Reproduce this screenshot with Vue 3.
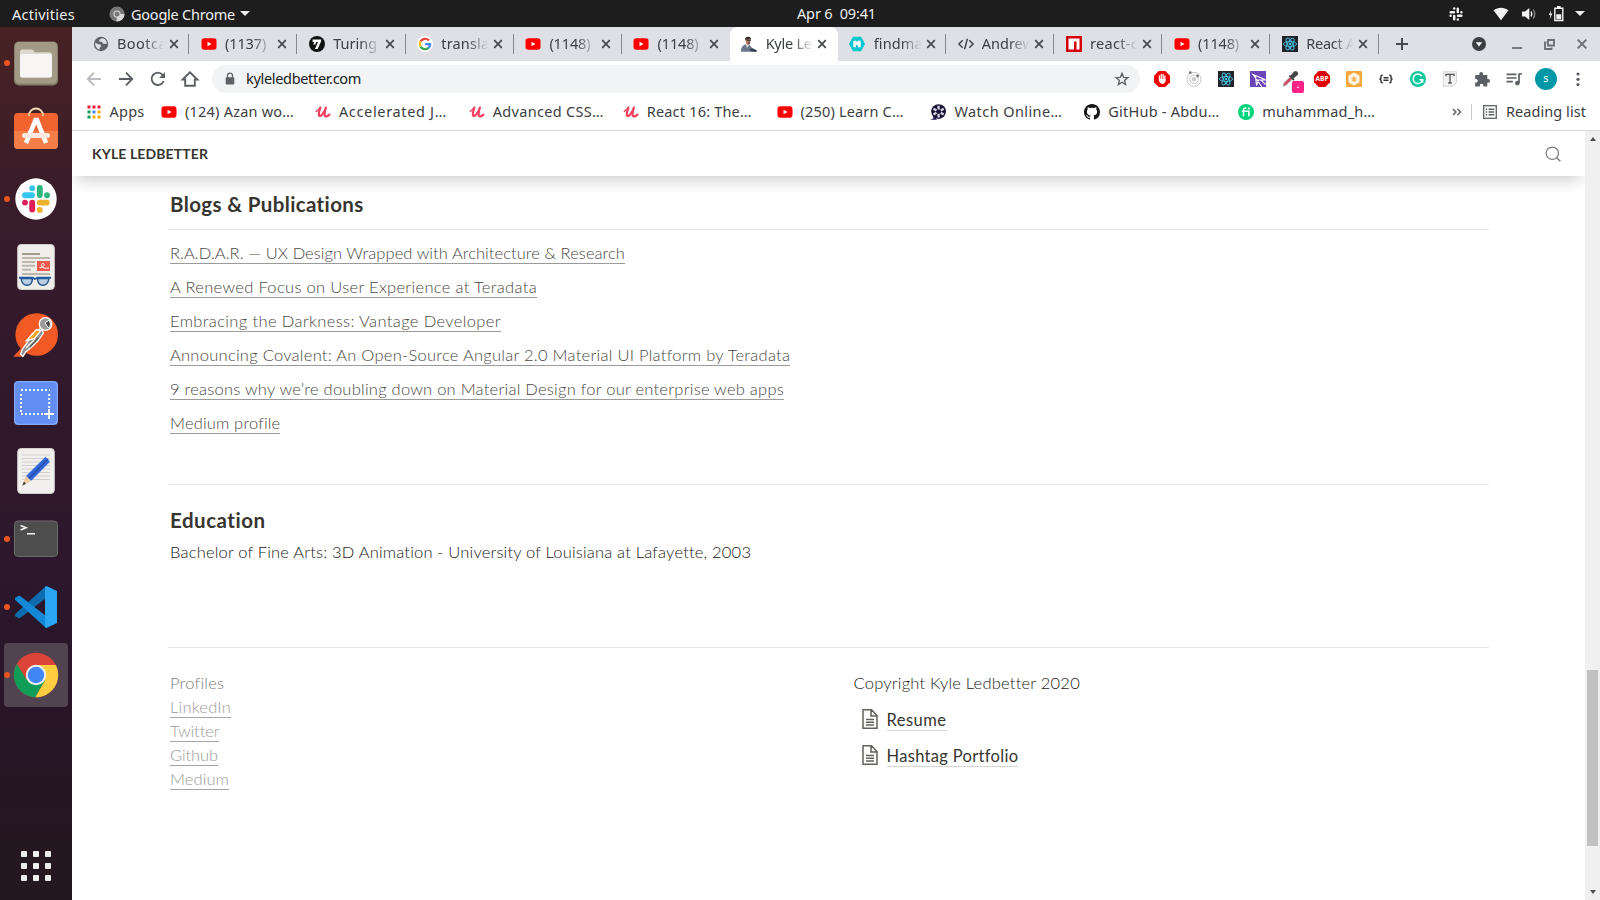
<script setup>
// Spreads the letters of an element so that its text takes the given width.
const vFit = {
  mounted(el, binding) {
    const natural = el.getBoundingClientRect().width
    el.style.letterSpacing = (binding.value - natural) / el.textContent.length + 'px'
  },
}

const atom = `<rect width="16" height="16" fill="#20232a"/><g fill="none" stroke="#4cc3e6" stroke-width=".9"><ellipse cx="8" cy="8" rx="6.6" ry="2.5"/><ellipse cx="8" cy="8" rx="6.6" ry="2.5" transform="rotate(60 8 8)"/><ellipse cx="8" cy="8" rx="6.6" ry="2.5" transform="rotate(120 8 8)"/></g><circle cx="8" cy="8" r="1.3" fill="#4cc3e6"/>`

const icons = {
  globe: `<circle cx="8" cy="8" r="7.2" fill="#5f6368"/><path d="M2.200 6.600 5.200 8.300l2.300.2.800 1.800-1.500 1.300-.4 2.200C3.800 13 1.800 10 2.200 6.600zM8.800 2.300 6.300 3.700l-.2 1.700 2.500.3 1.500 2 3.700.2C14 5 11.900 2.500 8.800 2.300z" fill="#dee0e5"/>`,
  yt: `<rect x=".5" y="2.300" width="15" height="11.400" rx="2.600" fill="#f00"/><path d="M6.500 5.700v4.600l4-2.300z" fill="#fff"/>`,
  turing: `<circle cx="8" cy="8" r="8" fill="#111"/><path d="M3.600 3.500h8.700l-.4 2.200L8.600 13H6l3-6.900H7.400L6.300 8.600H4.200l1.100-2.500H3.600z" fill="#fff"/>`,
  google: `<circle cx="8" cy="8" r="8" fill="#fff"/><g fill="none" stroke-width="2.200"><path d="M11.900 4.500A5.200 5.200 0 0 0 3.500 5.400" stroke="#ea4335"/><path d="M3.500 5.400a5.300 5.300 0 0 0 0 5.200" stroke="#fbbc05"/><path d="M3.500 10.600a5.200 5.200 0 0 0 8 1.300" stroke="#34a853"/><path d="M11.500 11.900A5 5 0 0 0 13.100 8.100H8.200" stroke="#4285f4"/></g>`,
  kyle: `<path d="M0 15.800C0 12 1 10 4.200 8.600l3.600-.6 2.900 3.500 5 2.800-.2 1.600-6.500-.2-1.600.1z" fill="#6b7688"/><path d="M4.800 7.800 6 12l2.200-3.500z" fill="#e8e6e8"/><path d="M9 12.600l6.500 1.700-.3 1.400-5.700-1z" fill="#30384a"/><path d="M4.600 4 5.200 8l2.200 1L9.200 7l.5-3.700z" fill="#b87862"/><path d="M4.400 4.600c-.8-3 1-4 2.900-3.900 1.800.1 2.900.9 2.600 2.200L6 3.400z" fill="#352725"/><path d="M5.200 3.600h4.600v1.200h-3.600zM6.700 6.600h2.200L8.400 8.200z" fill="#2a2225"/>`,
  hex: `<path d="M4 .7h8L16 8l-4 7.300H4L0 8z" fill="#00c8ce"/><path d="M4.300 4.700h2.600L8 6l1.100-1.300h2.600v6.600H9.100V9.300H6.900v2H4.300z" fill="#fff"/>`,
  code: `<path d="M4.700 4.200.9 8l3.800 3.800M11.300 4.200 15.100 8l-3.800 3.800M9.400 2.800 6.600 13.200" fill="none" stroke="#3c4043" stroke-width="1.400"/>`,
  npm: `<rect width="16" height="16" fill="#d8000b"/><path d="M2.500 2.500h11v11h-3v-8H8v8H2.500z" fill="#fff"/>`,
  atom,
  apps: `<g><path fill="#ea1c3c" d="M1.500 1.500h3v3h-3zM6.500 1.500h3v3h-3zM11.500 1.500h3v3h-3z"/><path fill="#0f9d58" d="M1.500 6.500h3v3h-3zM1.500 11.500h3v3h-3z"/><path fill="#4285f4" d="M6.500 6.500h3v3h-3z"/><path fill="#f9ab00" d="M11.500 6.500h3v3h-3zM6.500 11.500h3v3h-3zM11.500 11.500h3v3h-3z"/></g>`,
  udemy: `<g fill="none" stroke="#f4415f" stroke-linecap="round" stroke-linejoin="round"><path d="M1.300 7.400Q3.500 6.200 5.200 3.600" stroke-width="1.600"/><path d="M5.400 3.600Q3.400 8.500 3.900 11.400 5.800 13.500 8.800 8" stroke-width="2.200"/><path d="M10.900 3.600Q9 8.600 9.700 11.600 11.200 13.700 14.400 10.600" stroke-width="2.200"/><path d="M8.800 8Q10 6 10.800 3.600" stroke-width="1.300"/></g>`,
  reel: `<path d="M2 9l1.600 5.200-3.200 1.600H7z" fill="#241654"/><circle cx="8.600" cy="7.600" r="7.400" fill="#1b1636"/><g stroke="#d4d4e4" stroke-width="2.300"><path d="M8.600 1.800v3.600M8.600 9.800v3.600M3.500 4.700l3 1.700M10.700 8.800l3 1.700M3.500 10.500l3-1.700M10.700 6.400l3-1.700"/></g>`,
  github: `<path fill="#151515" d="M8 0C3.580 0 0 3.580 0 8c0 3.540 2.290 6.530 5.470 7.590.4.070.550-.170.550-.380 0-.190-.010-.820-.010-1.490-2.010.370-2.530-.490-2.690-.940-.090-.230-.480-.940-.820-1.130-.280-.150-.680-.520-.010-.530.630-.010 1.080.580 1.230.820.720 1.210 1.870.870 2.330.660.070-.520.280-.870.510-1.070-1.780-.200-3.640-.890-3.640-3.950 0-.870.310-1.590.820-2.150-.080-.200-.360-1.020.080-2.120 0 0 .670-.210 2.200.820.640-.180 1.320-.270 2-.270s1.360.090 2 .270c1.530-1.040 2.200-.820 2.200-.820.440 1.100.160 1.920.080 2.120.510.560.820 1.270.820 2.150 0 3.070-1.870 3.750-3.650 3.950.290.250.540.730.540 1.480 0 1.070-.010 1.930-.010 2.200 0 .210.150.460.550.380A8.010 8.010 0 0 0 16 8c0-4.420-3.580-8-8-8z"/>`,
  fiverr: `<circle cx="8" cy="8" r="8" fill="#00d47e"/><path d="M5.500 12.200V6c0-1.500.8-2 2.700-1.900M3.700 7.200h7.200v5" fill="none" stroke="#fff" stroke-width="1.600"/><circle cx="10.900" cy="4.500" r="1" fill="#fff"/>`,
  back: `<path d="M15 8H2M8 1.700 1.800 8 8 14.300" fill="none" stroke="#b9bbbe" stroke-width="1.900"/>`,
  forward: `<path d="M1 8h13M8 1.700 14.200 8 8 14.300" fill="none" stroke="#5b5e63" stroke-width="1.900"/>`,
  reload: `<path d="M13.700 10A6.200 6.200 0 1 1 12.600 3.800L14 5.400" fill="none" stroke="#5b5e63" stroke-width="1.900"/><path d="M15 .900V6.900H9z" fill="#5b5e63"/>`,
  home: `<path d="M8 1.300.7 8.500h2.500v6.200h9.600V8.500h2.500z" fill="none" stroke="#5b5e63" stroke-width="1.900"/>`,
  lock: `<rect x="3.700" y="6.300" width="8.600" height="7.200" rx="1" fill="#5f6368"/><path d="M5.500 7V4.600a2.500 2.500 0 0 1 5 0V7" fill="none" stroke="#5f6368" stroke-width="1.300"/>`,
  star: `<path d="M8 2.200 9.600 6.300l4.300.3-3.300 2.800 1 4.200L8 11.300l-3.600 2.300 1-4.200L2.100 6.600l4.300-.3z" fill="none" stroke="#5b5e63" stroke-width="1.300"/>`,
  stop: `<path d="M4.700 0h6.600L16 4.700v6.600L11.300 16H4.700L0 11.300V4.700z" fill="#f40000"/><path d="M5.500 4.800v4M7.300 3.500v5M9.100 3.500v5M10.900 5v5" stroke="#fff" stroke-width="1.300" stroke-linecap="round"/><path d="M4.900 8h6.600v1.700c-.3 2-1.500 3.200-3.200 3.200S5.300 11.500 4.900 9.600z" fill="#fff"/>`,
  orbit: `<g fill="none" stroke="#c6c6c6"><circle cx="8" cy="8.300" r="7"/><circle cx="8" cy="8.300" r="4.200"/></g><circle cx="8" cy="8.300" r="2.200" fill="#c9c9c9"/><circle cx="4.300" cy="1.700" r="1.400" fill="#777"/><circle cx="11.600" cy="5" r="1.400" fill="#777"/>`,
  purple: `<rect width="16" height="16" fill="#6b44b8"/><path d="M3 3.500 16 9H7zM5.500 5l1 9.500L8.500 9M7 9l5 7M11 9l4.500 4.500" fill="none" stroke="#fff" stroke-width="1.100"/>`,
  dropper: `<path d="M1 15.200 2 12 8.300 5.700l2.200 2.200L4 14.300z" fill="#d64a62" stroke="#a8a8a8" stroke-width=".8"/><path d="M7.300 4.500 12 9.200M9 5.600 12.600 1.200c1.600-1 3.300.7 2.400 2.300L10.500 7.200z" fill="#444" stroke="#444" stroke-width="1.700"/>`,
  octagon: `<path d="M4.700 0h6.600L16 4.700v6.600L11.300 16H4.700L0 11.300V4.700z" fill="#e00000"/>`,
  amber: `<rect width="16" height="16" rx="1" fill="#f8a83c"/><path d="M8 1.500 13.500 4.700v6.600L8 14.500 2.500 11.300V4.700z" fill="#fff8e9"/><path d="M8 5v6M5.500 6.600l2.500 1.500 2.500-1.500M5.700 9.500 8 8.100l2.300 1.400" fill="none" stroke="#f5b35c" stroke-width="1.300"/>`,
  braces: `<path d="M4.700 4.300H4q-1 0-1 1v1.700L2 8l1 1v1.700q0 1 1 1h.7M11.300 4.300h.7q1 0 1 1v1.700L14 8l-1 1v1.700q0 1-1 1h-.7M5.500 6.800h5M5.500 9.300h5" fill="none" stroke="#333" stroke-width="1.400"/>`,
  grammarly: `<circle cx="8" cy="8" r="8" fill="#11c79b"/><path d="M11.800 5A4.800 4.800 0 1 0 12.600 8.700H9.500M12.700 8.500v3" fill="none" stroke="#fff" stroke-width="1.500"/>`,
  letter: `<path d="M1.200.7h13.300v10.800l-3.600 3.800H1.200z" fill="#f1f1f1" stroke="#cfcfcf" stroke-width=".8"/><path d="M4 5.200V3.300h8v1.900M8 3.300v8.700M6.200 12h3.600" fill="none" stroke="#555" stroke-width="1.300"/>`,
  puzzle: `<path d="M1.200 4h4.100V2.800a1.900 1.900 0 0 1 3.800 0V4h4.200v4h.8a1.900 1.900 0 0 1 0 3.800h-.8v3.800H9.400v-1.100a1.800 1.800 0 0 0-3.600 0v1.100H1.200v-4h1.100a1.900 1.900 0 0 0 0-3.700H1.200z" fill="#5b5e63"/>`,
  music: `<path d="M.5 3.300h10M.5 7h10M.5 10.700h6.300M13 12V3h3" fill="none" stroke="#5b5e63" stroke-width="1.700"/><circle cx="11.400" cy="12.100" r="2.300" fill="#5b5e63"/>`,
  dots: `<g fill="#5b5e63"><circle cx="8" cy="3" r="1.600"/><circle cx="8" cy="8.300" r="1.600"/><circle cx="8" cy="13.600" r="1.600"/></g>`,
  list: `<rect x="1.700" y="1.700" width="12.600" height="12.600" fill="none" stroke="#5f6368" stroke-width="1.300"/><path d="M3.800 5.200h1.400M6.500 5.200h5.800M3.800 8h1.400M6.500 8h5.800M3.800 10.800h1.400M6.500 10.800h5.800" stroke="#5f6368" stroke-width="1.500"/>`,
  search: `<circle cx="7.300" cy="7.200" r="6.200" fill="none" stroke="#7d7d7d" stroke-width="1.250"/><path d="M11.700 11.700l3.600 3.500" stroke="#7d7d7d" stroke-width="1.500"/>`,
  chromeMono: `<circle cx="8" cy="8" r="7.600" fill="#777"/><path d="M8 8h7.500A7.600 7.600 0 0 1 7.500 15.600z" fill="#d8d8d8"/><circle cx="8" cy="8" r="3.600" fill="#d8d8d8"/><circle cx="8" cy="8" r="2.500" fill="#777"/>`,
  slackMono: `<g stroke="#f2f2f2" stroke-width="2.500" stroke-linecap="round"><path d="M2.700 6.200h3.200M6.200 2.600h.01M9.800 2.700v3.200M13.400 6.200h.01M10.100 9.800h3.200M9.800 13.400h.01M6.200 10.100v3.200M2.600 9.800h.01"/></g>`,
  wifi: `<path d="M.5 4.200C5 .8 11 .8 15.500 4.200L8 14.200z" fill="#f2f2f2"/>`,
  sound: `<path d="M1 5.500h3L8.300 2v12L4 10.500H1z" fill="#f2f2f2"/><path d="M10 5.500q1.600 2.500 0 5" fill="none" stroke="#f2f2f2" stroke-width="1.400"/><path d="M12.200 3.500q3 4.500 0 9" fill="none" stroke="#8a8a8a" stroke-width="1.300"/>`,
  battery: `<path d="M6.800 2.200h8v12.300h-8z" fill="none" stroke="#f2f2f2" stroke-width="1.400"/><path d="M9 0h3.600v2H9zM8.300 8.200h5v5h-5zM3 4 .8 9h1.600l-.6 4.300L4.300 7.600H2.600z" fill="#f2f2f2"/>`,
}

const dock = [
  { running: true, art: `<rect x="2" y="2.500" width="44" height="44" rx="5" fill="#847d6c"/><rect x="3" y="3" width="42" height="41.500" rx="4.500" fill="#a29a87"/><path d="M8 13q0-2.500 2.500-2.500h9.300q2 0 2.600 2.700h15q2.400 0 2.400 2.400V36q0 2.500-2.400 2.500H10.500Q8 38.500 8 36z" fill="#ded9cc"/><rect x="8" y="15" width="32" height="23.500" rx="2.500" fill="#f7f6f4"/>` },
  { art: `<path d="M17 9c0-10 14-10 14 0" fill="none" stroke="#f4d9b0" stroke-width="2"/><rect x="2" y="6" width="44" height="36" rx="4" fill="#f26330"/><path d="M2 24h44v14q0 4-4 4H6q-4 0-4-4z" fill="#f57d48"/><path d="M17 6v3M31 6v3" stroke="#f4d9b0" stroke-width="1.500"/><path d="M14 36 23.500 13h1.500L34 36" fill="none" stroke="#fff" stroke-width="4.600"/><path d="M12.500 28.500h23" stroke="#fbe9e1" stroke-width="5" stroke-linecap="round"/>` },
  { running: true, art: `<circle cx="24" cy="24" r="20.700" fill="#fff"/><g stroke-width="5.900" stroke-linecap="round"><path d="M13 20.200h7M20.200 13.200h.01" stroke="#36c5f0"/><path d="M27.800 13v7M35 20.200h.01" stroke="#2eb67d"/><path d="M27.800 27.600h7M27.800 34.900h.01" stroke="#ecb22e"/><path d="M20.200 27.600v7M13 27.600h.01" stroke="#e01e5a"/></g>` },
  { art: `<rect x="5.700" y="1.500" width="36.600" height="45" rx="3.500" fill="#efeeeb" stroke="#d2d0cc"/><path d="M10 11h18" stroke="#a59c8a" stroke-width="2"/><path d="M10 15h28M10 19h13M10 22.800h13M10 26.800h9M10 31h28" stroke="#bdb7ab" stroke-width="2"/><rect x="25" y="18" width="13" height="10" fill="#f05a4c"/><path d="M27.500 24.500c5 0 6-4 3.500-4s-3 6 6 4.500" fill="none" stroke="#fff" stroke-width="1"/><path d="M9 35.500h11.500c-.5 9-10 9-11.500 0zM25.500 35.500H37c-1.500 9-11 9-11.500 0z" fill="#b9cfe4" stroke="#27568f" stroke-width="1.400"/><path d="M7 34.700h13.500q2.500 2 5 0H39" fill="none" stroke="#275ba0" stroke-width="2"/>` },
  { art: `<circle cx="24.700" cy="23.500" r="21.300" fill="#f15a24"/><path d="M1.300 45.700 11 35l3 8-3 2.800z" fill="#f15a24"/><path d="M29 17 31.500 22 26 30 18.500 37 13.500 41 11 45.500 8.500 43 10.500 38 15 32 20 23z" fill="#8f8f8f" stroke="#fff" stroke-width="1.300" stroke-linejoin="round"/><path d="M14.500 29.500 24.500 18.500l4.500 1-6.500 8z" fill="#f9a01b" stroke="#fff" stroke-width="1.300"/><path d="M14 37l9-9" stroke="#fff" stroke-width="1.200"/><path d="M18 36l8-9" stroke="#555" stroke-width="1.200"/><circle cx="33.500" cy="13" r="6.300" fill="#9b9b9b" stroke="#fff" stroke-width="1.300"/><path d="M33 12l4-3q3 5-.5 8z" fill="#4a4a4a" stroke="#fff"/>` },
  { art: `<rect x="2" y="2" width="44" height="44" rx="4" fill="#638ff5"/><rect x="2.700" y="2.700" width="42.600" height="42.600" rx="4" fill="none" stroke="#8fb2fa" stroke-width="1"/><path d="M9 11h29M9 35h24M9 15v19M37.200 15v14" fill="none" stroke="#fff" stroke-width="2" stroke-dasharray="2 2"/><path d="M37 30v10M32 35h10" stroke="#fff" stroke-width="1.800"/>` },
  { art: `<rect x="5.700" y="1.500" width="36.600" height="45" rx="3.500" fill="#f1f0ee" stroke="#d2d0cc"/><path d="M10 8h28M10 11.500h28M10 15h28M10 18.500h28M10 22h28M10 25.500h28M10 29h28M10 32.500h28" stroke="#d0d0d0"/><path d="M33.500 9.800 38 14.800 19 34l-5-5z" fill="#3568d8"/><path d="M36 12 16.800 31.500" stroke="#244fae" stroke-width="1.500"/><path d="M14 29l5 5-8.700 4.500z" fill="#f3c9a0"/><path d="M10.300 38.500 12 34.700l2 2z" fill="#333"/>` },
  { running: true, art: `<rect x="2.500" y="6" width="43" height="35.500" rx="3.500" fill="#4d4d4d" stroke="#6b6b6b"/><path d="M8.500 10.500 14 12.800l-5.500 2.300M15 18.700h8" fill="none" stroke="#f4f4f4" stroke-width="1.600"/>` },
  { running: true, art: `<path d="M3.500 33.500c-.8-.8-.8-2 0-2.800L34 3v12L8.500 34.800c-.8.600-1.700.6-2.400 0z" fill="#0d6bb0"/><path d="M3.500 14.500c-.8.800-.8 2 0 2.800L34 45V33L8.500 13.200c-.8-.6-1.700-.6-2.400 0z" fill="#1489d6"/><path d="M34.500 3 45 8v32l-10.500 5L33 44V4z" fill="#2aa5f2"/>` },
  { running: true, active: true, art: `<circle cx="24" cy="24" r="22.200" fill="#db4437"/><path d="M24 14h19.800A22.200 22.200 0 0 1 23.300 46.200L33 29z" fill="#ffcd40"/><path d="M4.800 12.900 14.800 29 33 29 23.300 46.200A22.200 22.200 0 0 1 4.800 12.900z" fill="#0f9d58"/><circle cx="24" cy="24" r="10.200" fill="#f1f1f1"/><circle cx="24" cy="24" r="8.200" fill="#4285f4"/>` },
]

const tabs = [
  { icon: 'globe', title: 'Bootca', w: 50 },
  { icon: 'yt', title: '(1137)', w: 41 },
  { icon: 'turing', title: 'Turing', w: 44 },
  { icon: 'google', title: 'transla', w: 48 },
  { icon: 'yt', title: '(1148)', w: 41 },
  { icon: 'yt', title: '(1148)', w: 41, last: true },
  { icon: 'kyle', title: 'Kyle Le', w: 46, active: true },
  { icon: 'hex', title: 'findma', w: 49 },
  { icon: 'code', title: 'Andrew', w: 52 },
  { icon: 'npm', title: 'react-c', w: 48 },
  { icon: 'yt', title: '(1148)', w: 41 },
  { icon: 'atom', title: 'React A', w: 49 },
]

const bookmarks = [
  { icon: 'yt', title: '(124) Azan wo…', w: 109 },
  { icon: 'udemy', title: 'Accelerated J…', w: 108 },
  { icon: 'udemy', title: 'Advanced CSS…', w: 111 },
  { icon: 'udemy', title: 'React 16: The…', w: 105 },
  { icon: 'yt', title: '(250) Learn C…', w: 103 },
  { icon: 'reel', title: 'Watch Online…', w: 108 },
  { icon: 'github', title: 'GitHub - Abdu…', w: 111 },
  { icon: 'fiverr', title: 'muhammad_h…', w: 113 },
]

const extensions = ['stop', 'orbit', 'atom', 'purple', 'dropper', 'octagon', 'amber', 'braces', 'grammarly', 'letter', 'puzzle', 'music']

const posts = [
  { title: 'R.A.D.A.R. — UX Design Wrapped with Architecture & Research', w: 455 },
  { title: 'A Renewed Focus on User Experience at Teradata', w: 367 },
  { title: 'Embracing the Darkness: Vantage Developer', w: 331 },
  { title: 'Announcing Covalent: An Open-Source Angular 2.0 Material UI Platform by Teradata', w: 620 },
  { title: '9 reasons why we’re doubling down on Material Design for our enterprise web apps', w: 614 },
  { title: 'Medium profile', w: 110 },
]

const profiles = [
  { title: 'LinkedIn', w: 61 },
  { title: 'Twitter', w: 49 },
  { title: 'Github', w: 48 },
  { title: 'Medium', w: 59 },
]

const files = [
  { title: 'Resume', w: 60 },
  { title: 'Hashtag Portfolio', w: 131.5 },
]
</script>

<template>
  <div class="desktop">
    <header class="topbar">
      <div class="top-left">
        <span v-fit="63">Activities</span>
        <svg class="i16 app-icon" viewBox="0 0 16 16" v-html="icons.chromeMono" />
        <span v-fit="104">Google Chrome</span>
        <i class="caret" />
      </div>
      <div class="clock"><span v-fit="79">Apr 6&nbsp; 09:41</span></div>
      <div class="top-right">
        <svg class="i16 slack" viewBox="0 0 16 16" v-html="icons.slackMono" />
        <svg class="i16 wifi" viewBox="0 0 16 16" v-html="icons.wifi" />
        <svg class="i16 sound" viewBox="0 0 16 16" v-html="icons.sound" />
        <svg class="i16" viewBox="0 0 16 16" v-html="icons.battery" />
        <i class="caret" />
      </div>
    </header>

    <div class="workspace">
      <nav class="dock">
        <div v-for="(app, n) in dock" :key="n" class="app" :class="{ active: app.active }">
          <i v-if="app.running" class="running" />
          <svg width="48" height="48" viewBox="0 0 48 48" v-html="app.art" />
        </div>
        <div class="launcher"><i v-for="n in 9" :key="n" /></div>
      </nav>

      <div class="browser">
        <div class="tabstrip">
          <div v-for="(tab, n) in tabs" :key="n" class="tab" :class="{ active: tab.active, last: tab.last }">
            <svg class="i16" viewBox="0 0 16 16" v-html="icons[tab.icon]" />
            <div class="title"><span v-fit="tab.w">{{ tab.title }}</span></div>
            <svg class="close" viewBox="0 0 10 10"><path d="M1.200 1.200l7.600 7.600M8.800 1.200 1.200 8.800" /></svg>
          </div>
          <svg class="plus" viewBox="0 0 12 12"><path d="M6 0v12M0 6h12" /></svg>
          <div class="window-controls">
            <svg width="14" height="14" viewBox="0 0 14 14"><circle cx="7" cy="7" r="7" fill="#3c4043" /><path d="M3.800 5.300h6.400L7 9.500z" fill="#fff" /></svg>
            <svg width="10" height="12" viewBox="0 0 10 12"><path d="M0 10h10" /></svg>
            <svg width="11" height="11" viewBox="0 0 11 11"><path d="M4 1h6v5.500H4zM2.500 3.500H1V10h6.500V8.500" /></svg>
            <svg width="10" height="10" viewBox="0 0 10 10"><path d="M.7.700l8.600 8.600M9.300.700.700 9.300" /></svg>
          </div>
        </div>

        <div class="toolbar">
          <div class="nav">
            <svg v-for="name in ['back', 'forward', 'reload', 'home']" :key="name" class="i16" viewBox="0 0 16 16" v-html="icons[name]" />
          </div>
          <div class="omnibox">
            <svg class="i16" viewBox="0 0 16 16" v-html="icons.lock" />
            <span v-fit="115" class="url">kyleledbetter.com</span>
            <svg class="i16 star" viewBox="0 0 16 16" v-html="icons.star" />
          </div>
          <div class="extensions">
            <div v-for="name in extensions" :key="name" class="ext">
              <svg class="i16" viewBox="0 0 16 16" v-html="icons[name]" />
              <b v-if="name === 'octagon'" class="abp">ABP</b>
              <b v-if="name === 'dropper'" class="badge">.</b>
            </div>
          </div>
          <div class="avatar">s</div>
          <svg class="i16 menu" viewBox="0 0 16 16" v-html="icons.dots" />
        </div>

        <div class="bookmarks">
          <div class="bookmark apps">
            <svg class="i16" viewBox="0 0 16 16" v-html="icons.apps" />
            <span v-fit="35">Apps</span>
          </div>
          <div v-for="(mark, n) in bookmarks" :key="n" class="bookmark">
            <svg class="i16" viewBox="0 0 16 16" v-html="icons[mark.icon]" />
            <span v-fit="mark.w">{{ mark.title }}</span>
          </div>
          <div class="reading">
            <svg class="more" viewBox="0 0 10 8"><path d="M1 1l3 3-3 3M5.500 1l3 3-3 3" /></svg>
            <i class="divider" />
            <svg class="i16" viewBox="0 0 16 16" v-html="icons.list" />
            <span v-fit="80">Reading list</span>
          </div>
        </div>

        <div class="viewport">
          <div class="page">
            <div class="site-header">
              <strong v-fit="116">KYLE LEDBETTER</strong>
              <svg class="i16" viewBox="0 0 16 16" v-html="icons.search" />
            </div>
            <main>
              <section class="blogs">
                <h2><span v-fit="194">Blogs &amp; Publications</span></h2>
                <ul>
                  <li v-for="post in posts" :key="post.title"><a v-fit="post.w">{{ post.title }}</a></li>
                </ul>
              </section>
              <section class="education">
                <h2><span v-fit="96">Education</span></h2>
                <p><span v-fit="581">Bachelor of Fine Arts: 3D Animation - University of Louisiana at Lafayette, 2003</span></p>
              </section>
              <footer>
                <div class="profiles">
                  <p><span v-fit="54">Profiles</span></p>
                  <p v-for="item in profiles" :key="item.title"><a v-fit="item.w">{{ item.title }}</a></p>
                </div>
                <div class="legal">
                  <p><span v-fit="226">Copyright Kyle Ledbetter 2020</span></p>
                  <div v-for="file in files" :key="file.title" class="file">
                    <svg width="16" height="20" viewBox="0 0 16 20"><path d="M1 .800h8.500l5.500 5.700v12.700H1zM9 1v6h6M4 10.500h8M4 13.200h8M4 16h8" /></svg>
                    <a v-fit="file.w">{{ file.title }}</a>
                  </div>
                </div>
              </footer>
            </main>
          </div>
          <div class="scrollbar">
            <i class="arrow up" />
            <div class="thumb" />
            <i class="arrow down" />
          </div>
        </div>
      </div>
    </div>
  </div>
</template>

<style>
body { margin: 0; overflow: hidden; }
</style>

<style scoped>
* { box-sizing: border-box; }
.desktop { width: 1600px; height: 900px; display: flex; flex-direction: column; overflow: hidden; background: #fff; font-family: "Noto Sans", "Open Sans", sans-serif; font-size: 14.5px; color: #3c4043; }
.desktop span, .desktop strong, .desktop a { white-space: nowrap; }
svg { display: block; flex: none; }
.i16 { width: 16px; height: 16px; overflow: visible; }

.topbar { height: 27px; flex: none; display: grid; grid-template-columns: 1fr auto 1fr; align-items: center; background: #1d1d1d; color: #eee; line-height: 26px; }
.top-left, .top-right { display: flex; align-items: center; }
.top-left { padding-left: 12px; }
.app-icon { margin: 0 6px 0 34px; }
.caret { width: 0; height: 0; border: 5px solid transparent; border-top-color: #eee; border-bottom: 0; }
.top-left .caret { margin-left: 5px; }
.clock { margin: 0 -36.500px 0 36.500px; line-height: 25px; }
.top-right { justify-content: flex-end; padding-right: 15px; }
.slack { margin-right: 29px; }
.wifi { margin-right: 12px; }
.sound { margin-right: 11px; }
.top-right .caret { margin-left: 11px; }

.workspace { flex: 1; display: flex; min-height: 0; }
.dock { width: 72px; flex: none; padding-top: 2px; display: flex; flex-direction: column; align-items: center; background: linear-gradient(#482222 0, #3b1d29 17%, #33192c 36%, #2c172c 62%, #281628 78%, #24171d 100%); }
.app { position: relative; width: 64px; height: 64px; margin: 2px 0; display: grid; place-items: center; flex: none; border-radius: 4px; }
.app.active { background: #51434f; }
.running { position: absolute; left: 0; top: 29px; width: 6px; height: 6px; border-radius: 50%; background: #e95420; }
.launcher { margin-top: auto; margin-bottom: 19px; display: grid; grid-template-columns: repeat(3, 6px); gap: 6px; }
.launcher i { height: 6px; border-radius: 1px; background: #eeeeec; }

.browser { flex: 1; display: flex; flex-direction: column; min-width: 0; }
.tabstrip { height: 34px; flex: none; display: flex; align-items: center; padding-left: 9.200px; background: #dee0e5; }
.tab { position: relative; width: 108.120px; height: 34px; flex: none; display: flex; align-items: center; padding-left: 11.500px; }
.tab::after { content: ""; position: absolute; right: 0; top: 7px; width: 1px; height: 20px; background: #85888d; }
.tab.active::after, .tab.last::after { display: none; }
.tab.active { background: #fff; border-radius: 8px 8px 0 0; }
.title { width: 54px; margin-left: 8.300px; line-height: 20px; padding-bottom: 2px; -webkit-mask-image: linear-gradient(90deg, #000 50%, transparent 88%); mask-image: linear-gradient(90deg, #000 50%, transparent 88%); }
.title span { display: inline-block; }
.close { width: 10px; height: 10px; margin-left: -2.200px; stroke: #45494d; stroke-width: 1.700; }
.plus { width: 12px; height: 12px; margin-left: 17px; stroke: #45494d; stroke-width: 2; }
.window-controls { margin-left: auto; padding-right: 13px; display: flex; align-items: center; gap: 22px; fill: none; stroke: #6a6d71; stroke-width: 1.800; }
.window-controls svg:first-child { stroke: none; margin-right: 4px; }

.toolbar { height: 36px; flex: none; display: flex; align-items: center; padding-left: 14px; }
.nav { display: flex; gap: 16px; }
.omnibox { width: 928px; height: 28px; margin-left: 14px; padding: 0 10px; border-radius: 14px; display: flex; align-items: center; background: #f1f3f4; color: #202124; }
.url { margin-left: 8px; padding-bottom: 2px; }
.star { margin-left: auto; }
.extensions { display: flex; margin-left: 6px; }
.ext { position: relative; width: 32px; height: 28px; display: grid; place-items: center; }
.abp { position: absolute; top: 8px; left: 0; width: 32px; text-align: center; font: bold 6.500px/12px "Open Sans", sans-serif; color: #fff; }
.badge { position: absolute; left: 18px; top: 16px; width: 12px; height: 12px; border-radius: 2px; background: #ff2388; color: #fff; text-align: center; font-size: 9px; line-height: 8px; }
.avatar { width: 22px; height: 22px; margin-left: 5px; border-radius: 50%; background: #0097a7; color: #fff; text-align: center; font-size: 11px; line-height: 20px; }
.menu { margin-left: 13px; }

.bookmarks { height: 34px; flex: none; display: flex; align-items: center; padding: 0 14px 3px 13.500px; border-bottom: 1px solid #d3d4dc; }
.bookmark { width: 153.900px; display: flex; align-items: center; gap: 8px; flex: none; }
.bookmark.apps { width: 75.500px; }
.bookmark span, .reading span { padding-bottom: 2px; }
.reading { margin-left: auto; display: flex; align-items: center; }
.more { width: 10px; height: 8px; fill: none; stroke: #5f6368; stroke-width: 1.500; margin-right: 9px; }
.divider { width: 1px; height: 16px; background: #c9cacd; margin-right: 10px; }
.reading span { margin-left: 8px; }

.viewport { flex: 1; display: flex; min-height: 0; }
.page { flex: 1; overflow: hidden; font-family: Lato, sans-serif; font-size: 16.500px; color: #37352f; }
.site-header { position: relative; height: 45px; padding: 0 24px 0 20px; display: flex; align-items: center; justify-content: space-between; background: #fff; box-shadow: 0 8px 16px -4px rgba(0, 0, 0, .2); font-size: 14px; }
.site-header strong { font-weight: 700; line-height: 45px; }
main { margin: 0 96px; }
h2 { margin: 0; font-size: 20.500px; font-weight: 700; line-height: 28px; padding-left: 2px; }
p { margin: 0; }
a { display: inline-block; }
.blogs { height: 309px; padding-top: 14px; border-bottom: 1px solid #e6e6e6; }
.blogs h2 { height: 40px; border-bottom: 1px solid #e6e6e6; }
ul { list-style: none; margin: 0; padding: 10px 0 0 2px; font-weight: 300; }
li { height: 34px; }
li a { height: 24px; line-height: 26px; border-bottom: 1px solid #9b9b9b; color: #4a4843; }
.education { height: 163px; padding-top: 21px; border-bottom: 1px solid #e6e6e6; }
.education p { padding: 6px 0 0 2px; line-height: 24px; }
.education p, .legal > p { font-weight: 300; color: #1a1916; }
footer { display: grid; grid-template-columns: 683.500px 1fr; padding: 23px 0 0 2px; }
.profiles { font-weight: 300; color: #7c7b78; }
.profiles p { height: 24px; line-height: 24px; }
.profiles a { height: 23px; line-height: 24px; border-bottom: 1px solid #a5a5a5; color: #9c9a97; }
.legal { line-height: 24px; }
.file { height: 36px; display: flex; align-items: center; padding-left: 8px; gap: 9px; }
.legal > p { height: 30px; }
.file svg { fill: none; stroke: #62615c; stroke-width: 1.500; }
.file a { height: 23px; line-height: 24px; border-bottom: 1px solid #d5d5d5; }

.scrollbar { width: 15px; flex: none; display: flex; flex-direction: column; align-items: center; background: #f0f0f0; }
.arrow { width: 0; height: 0; border: 3.500px solid transparent; }
.up { margin-top: 6px; border-top: 0; border-bottom: 4px solid #4d4d4d; }
.down { margin: auto 0 6px; border-bottom: 0; border-top: 4px solid #4d4d4d; }
.thumb { width: 11px; height: 176px; margin-top: 529px; background: #c1c1c1; }
</style>
